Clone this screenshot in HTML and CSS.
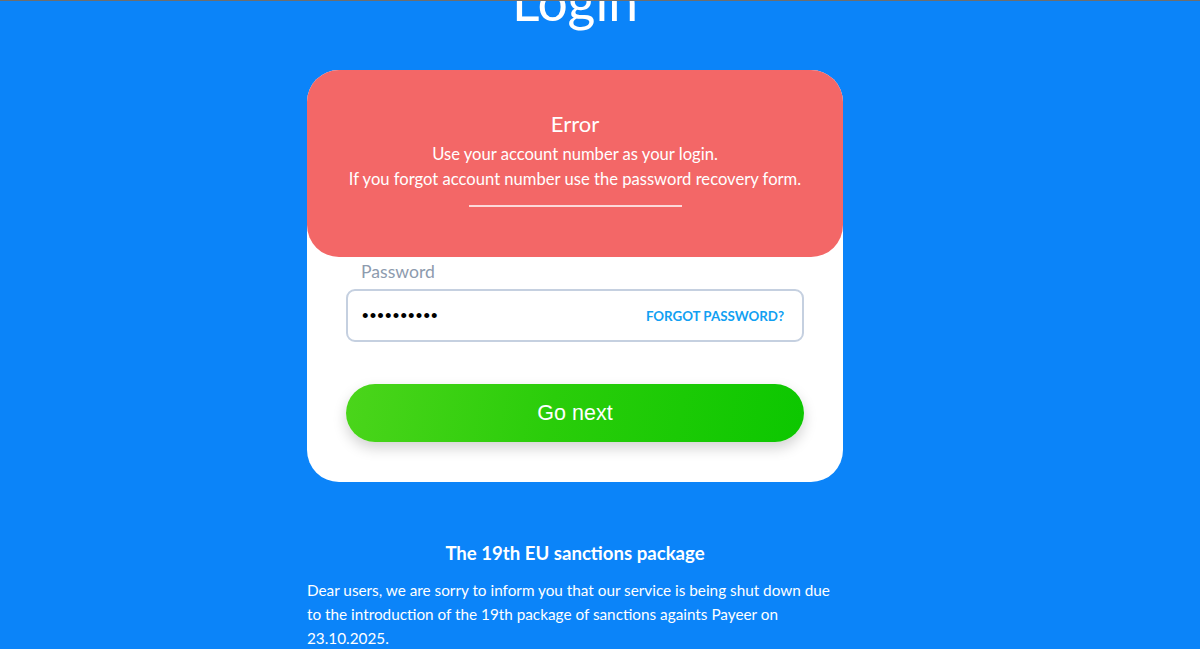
FILE: index.html
```html
<!DOCTYPE html>
<html lang="en">
<head>
    <meta charset="UTF-8">
    <meta name="viewport" content="width=device-width, initial-scale=1.0">
    <title>Login</title>
    <link rel="stylesheet" href="styles.css">
</head>
<body>

    <div class="page">
        <h1 class="page-title">Login</h1>

        <div class="login-card">
            <div class="error-box">
                <div class="error-title">Error</div>
                <p class="error-text">Use your account number as your login.</p>
                <p class="error-text">If you forgot account number use the password recovery form.</p>
                <div class="error-line"></div>
            </div>

            <form class="login-form">
                <label class="field-label" for="password">Password</label>
                <div class="field">
                    <input class="field-input" id="password" type="password" value="1234567890">
                    <a class="field-link" href="#">FORGOT PASSWORD?</a>
                </div>

                <button class="btn-next" type="button">Go next</button>
            </form>
        </div>

        <div class="notice">
            <h2 class="notice-title">The 19th EU sanctions package</h2>
            <p class="notice-text">Dear users, we are sorry to inform you that our service is being shut down due to the introduction of the 19th package of sanctions againts Payeer on 23.10.2025.</p>
        </div>
    </div>

</body>
</html>
```

FILE: styles.css
```css
html {
    border-top: 1px solid #6e6e6e;
}
body {
    margin: 0;
    padding-right: 50px;
    background-color: #0b84f9;
    font-family: Lato, "Open Sans", sans-serif;
    color: #fff;
    overflow: hidden;
}
.page {
    width: 536px;
    margin: 0 auto;
}
.page-title {
    margin: -32px 0 0;
    font-size: 53.5px;
    font-weight: 400;
    line-height: 62px;
    text-align: center;
}
.login-card {
    margin-top: 39px;
    background: #fff;
    border-radius: 32px;
    padding-bottom: 40px;
}
.error-box {
    background-color: #f36767;
    border-radius: 32px;
    padding: 40px 20px 50px;
    text-align: center;
}
.error-title {
    font-size: 22px;
    line-height: 28px;
    margin-bottom: 4px;
}
.error-text {
    margin: 0;
    font-size: 16.6px;
    line-height: 25px;
}
.error-line {
    width: 213px;
    height: 2px;
    margin: 13px auto 0;
    background: rgba(255, 255, 255, 0.75);
}
.login-form {
    padding: 4px 39px 0;
}
.field-label {
    display: block;
    padding-left: 15px;
    font-size: 17.6px;
    line-height: 22px;
    color: #8d9bae;
    margin-bottom: 6px;
}
.field {
    display: flex;
    align-items: center;
    height: 53px;
    border: 2px solid #c5d0e0;
    border-radius: 9px;
    padding: 0 18px 0 14px;
    box-sizing: border-box;
}
.field-input {
    flex: 1;
    border: 0;
    outline: none;
    font-size: 18.5px;
    letter-spacing: 1.2px;
    color: #000;
    background: transparent;
    padding: 0;
}
.field-link {
    font-size: 13.3px;
    font-weight: 700;
    color: #11a0f2;
    text-decoration: none;
}
.btn-next {
    display: block;
    width: 100%;
    height: 58px;
    margin-top: 42px;
    border: 0;
    border-radius: 29px;
    background: linear-gradient(100deg, #4bd51b 0%, #2acd0a 45%, #0cc700 100%);
    box-shadow: 0 6px 14px rgba(0, 0, 0, 0.18);
    color: #fff;
    font-family: "Liberation Sans", Arial, sans-serif;
    font-size: 21.5px;
}
.notice {
    padding-top: 58px;
}
.notice-title {
    margin: 0 0 12px;
    font-size: 18.6px;
    font-weight: 700;
    line-height: 26px;
    text-align: center;
}
.notice-text {
    margin: 0;
    font-size: 15.3px;
    line-height: 24px;
}
```
